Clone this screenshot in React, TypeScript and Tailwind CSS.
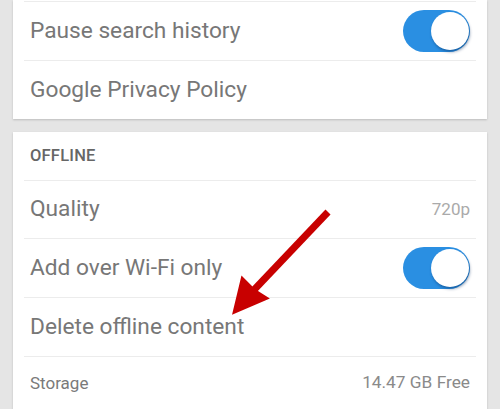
import React from "react";

function Toggle() {
  return (
    <div className="relative w-[67px] h-[42px] rounded-full bg-[#2a8fe2]">
      <div className="absolute right-[1px] top-[2px] w-[38px] h-[38px] rounded-full bg-white shadow-[1px_2px_3px_rgba(0,40,90,0.45)]" />
    </div>
  );
}

function Row({
  label,
  right,
  h = "h-[59px]",
  last = false,
}: {
  label: string;
  right?: React.ReactNode;
  h?: string;
  last?: boolean;
}) {
  return (
    <div
      className={`${h} flex items-center justify-between px-[6px] ${
        last ? "" : "border-b border-[#ececec]"
      }`}
    >
      <span className="text-[22.7px] text-[#777777] leading-none">{label}</span>
      {right}
    </div>
  );
}

export default function App() {
  return (
    <div
      className="w-[500px] h-[409px] overflow-hidden bg-[#e5e5e5] px-[13px] flex flex-col gap-[13px]"
      style={{ fontFamily: "Roboto, 'Noto Sans', sans-serif" }}
    >
      <div className="relative bg-white shadow-[0_1px_2px_rgba(0,0,0,0.18)] px-[11px] pt-[1px]">
        <div className="border-t border-[#ececec]" />
        <Row label="Pause search history" h="h-[59px]" right={<Toggle />} />
        <Row label="Google Privacy Policy" h="h-[58px]" last />
      </div>

      <div className="relative bg-white shadow-[0_1px_2px_rgba(0,0,0,0.18)] px-[11px] flex-1">
        <div className="h-[49px] flex items-center px-[6px] border-b border-[#ececec]">
          <span className="text-[16.5px] font-medium text-[#666666] leading-none tracking-[0.2px]">
            OFFLINE
          </span>
        </div>
        <Row
          label="Quality"
          h="h-[58px]"
          right={<span className="text-[17px] text-[#aaaaaa] leading-none">720p</span>}
        />
        <Row label="Add over Wi-Fi only" h="h-[59px]" right={<Toggle />} />
        <Row label="Delete offline content" h="h-[59px]" />
        <div className="h-[52px] flex items-center justify-between px-[6px]">
          <span className="text-[17px] text-[#7a7a7a] leading-none">Storage</span>
          <span className="text-[17.3px] text-[#8a8a8a] leading-none">14.47 GB Free</span>
        </div>
      </div>

      <svg
        className="absolute left-0 top-0 pointer-events-none"
        width="500"
        height="409"
        viewBox="0 0 500 409"
      >
        <line x1="328" y1="212" x2="252" y2="292" stroke="#c80000" strokeWidth="7" />
        <polygon
          points="243,281 236,310 264,298 253,291"
          fill="#c80000"
          stroke="#c80000"
          strokeWidth="5.5"
          strokeLinejoin="miter"
        />
      </svg>
    </div>
  );
}
